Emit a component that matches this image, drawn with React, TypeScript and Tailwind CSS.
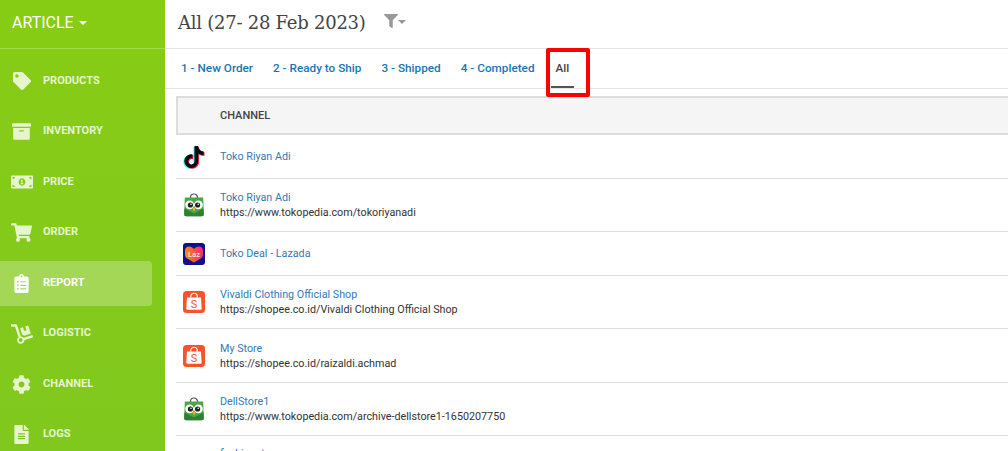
import { ReactNode } from 'react'
import { FaTag, FaArchive, FaMoneyBillAlt, FaShoppingCart, FaClipboardList, FaDolly, FaCog, FaFileAlt, FaFilter } from 'react-icons/fa'

const navItems = [
  { label: 'PRODUCTS', icon: <FaTag size={18} /> },
  { label: 'INVENTORY', icon: <FaArchive size={19} /> },
  { label: 'PRICE', icon: <FaMoneyBillAlt size={22} /> },
  { label: 'ORDER', icon: <FaShoppingCart size={21} /> },
  { label: 'REPORT', icon: <FaClipboardList size={19} />, active: true },
  { label: 'LOGISTIC', icon: <FaDolly size={22} /> },
  { label: 'CHANNEL', icon: <FaCog size={19} /> },
  { label: 'LOGS', icon: <FaFileAlt size={19} /> },
]

const tabs = ['1 - New Order', '2 - Ready to Ship', '3 - Shipped', '4 - Completed']

const tiktokPath =
  'M12.525.02c1.31-.02 2.61-.01 3.91-.02.08 1.53.63 3.09 1.75 4.17 1.12 1.11 2.7 1.62 4.24 1.79v4.03c-1.44-.05-2.89-.35-4.2-.97-.57-.26-1.1-.59-1.62-.93-.01 2.92.01 5.84-.02 8.75-.08 1.4-.54 2.79-1.35 3.94-1.31 1.92-3.58 3.17-5.91 3.21-1.43.08-2.86-.31-4.08-1.03-2.02-1.19-3.44-3.37-3.65-5.71-.02-.5-.03-1-.01-1.49.18-1.9 1.12-3.72 2.58-4.96 1.66-1.44 3.98-2.13 6.15-1.72.02 1.48-.04 2.96-.04 4.44-.99-.32-2.15-.23-3.02.37-.63.41-1.11 1.04-1.36 1.75-.21.51-.15 1.07-.14 1.61.24 1.64 1.82 3.02 3.5 2.87 1.12-.01 2.19-.66 2.77-1.61.19-.33.4-.67.41-1.06.1-1.79.06-3.57.07-5.36.01-4.03-.01-8.05.02-12.07z'

function TikTok() {
  return (
    <svg width="24" height="24" viewBox="-1 -1 26 26">
      <path d={tiktokPath} fill="#25f4ee" transform="translate(-1 .8)" />
      <path d={tiktokPath} fill="#fe2c55" transform="translate(1 .8)" />
      <path d={tiktokPath} fill="#0b0b12" />
    </svg>
  )
}

function Tokopedia() {
  return (
    <svg width="22" height="24" viewBox="0 0 22 24">
      <path d="M7.500 6V4.500a3.500 3.500 0 0 1 7 0V6" fill="none" stroke="#555a55" strokeWidth="1.200" />
      <path d="M1.800 4.500h18.400l.6 16.500a2 2 0 0 1-2 2.200H3.200a2 2 0 0 1-2-2.200z" fill="#4aa844" />
      <path d="M1.400 15.500l9.600 5 9.600-5 .2 5.500a2 2 0 0 1-2 2.200H3.200a2 2 0 0 1-2-2.200z" fill="#2e7f33" />
      <circle cx="6.600" cy="11.800" r="4.400" fill="#fff" />
      <circle cx="15.400" cy="11.800" r="4.400" fill="#fff" />
      <circle cx="7.400" cy="12" r="2.600" fill="#222" />
      <circle cx="14.600" cy="12" r="2.600" fill="#222" />
      <circle cx="8" cy="11.200" r=".8" fill="#fff" />
      <circle cx="15.200" cy="11.200" r=".8" fill="#fff" />
      <path d="M9.300 15h3.400L11 18.500z" fill="#f5b335" />
    </svg>
  )
}

function Lazada() {
  return (
    <svg width="22" height="22" viewBox="0 0 22 22">
      <defs>
        <linearGradient id="laz" x1="0" y1="0" x2="1" y2="0">
          <stop offset="0" stopColor="#ff8a00" />
          <stop offset="1" stopColor="#f0287f" />
        </linearGradient>
      </defs>
      <rect width="22" height="22" rx="3" fill="#10108a" />
      <path d="M11 19.500 3.800 15.200C2.500 14.400 2 13 2 11.500V7.500C2 5 4 3.500 6.200 3.500c1.900 0 3.500 1 4.800 2.500 1.300-1.500 2.900-2.500 4.800-2.500C18 3.500 20 5 20 7.500v4c0 1.500-.5 2.900-1.800 3.700z" fill="url(#laz)" />
      <text x="11" y="13.500" textAnchor="middle" fontSize="7.500" fontWeight="500" fill="#fde6df" fontFamily="Roboto, sans-serif">Laz</text>
    </svg>
  )
}

function Shopee() {
  return (
    <svg width="22" height="22" viewBox="0 0 22 22">
      <rect width="22" height="22" rx="3.500" fill="#f6532d" />
      <path d="M7.800 6.500V5.500a3.200 3.200 0 0 1 6.400 0v1" fill="none" stroke="#fff" strokeWidth="1.100" />
      <path d="M4 6.500h14l.7 11a1.300 1.300 0 0 1-1.300 1.300H4.600a1.300 1.300 0 0 1-1.300-1.300z" fill="#fff" />
      <text x="11" y="16.800" textAnchor="middle" fontSize="11" fontWeight="400" fill="#f6532d" fontFamily="Roboto, sans-serif">S</text>
    </svg>
  )
}

function Row({ icon, name, url, height }: { icon: ReactNode; name: string; url?: string; height: string }) {
  return (
    <div className={`flex items-center border-b border-[#ddd] ${height}`}>
      <div className="w-[36px] mr-[8px] shrink-0 flex justify-center">{icon}</div>
      <div className="text-[10.75px] leading-[15px]">
        <div className="text-[#337ab7]">{name}</div>
        {url && <div className="text-[#333]">{url}</div>}
      </div>
    </div>
  )
}

export default function App() {
  return (
    <div className="flex w-[1008px] h-[451px] overflow-hidden bg-white font-['Roboto',sans-serif]">
      {/* sidebar */}
      <div className="w-[165px] shrink-0 bg-gradient-to-b from-[#87cc14] to-[#81c81e]">
        <div className="h-[49px] border-b border-[#a4da50] pl-3 pb-[3px] flex items-center gap-[5px] text-white text-[16px]">
          ARTICLE
          <span className="border-x-[4px] border-t-[4px] border-x-transparent border-t-white" />
        </div>
        <div className="pt-[9.5px] flex flex-col gap-[5.5px]">
          {navItems.map(item => (
            <div
              key={item.label}
              className={`h-[45px] w-[152px] flex items-center rounded-r ${item.active ? 'bg-[#a3d755] text-white' : 'text-[#e6f5cc]'}`}>
              <div className="w-[43px] shrink-0 flex justify-center">{item.icon}</div>
              <span className="text-[11px] font-bold">{item.label}</span>
            </div>
          ))}
        </div>
      </div>

      {/* content */}
      <div className="flex-1 min-w-0">
        <div className="h-[49px] border-b border-[#e5e5e5] flex items-center pl-[13px] pb-[4px]">
          <span className="text-[#444] text-[18px] font-['DejaVu_Serif',serif] tracking-[-0.25px]">All (27- 28 Feb 2023)</span>
          <span className="ml-[18px] flex items-center text-[#999] -mt-[3px]">
            <FaFilter size={14} />
            <span className="border-x-[4px] border-t-[4px] border-x-transparent border-t-[#999] mt-[2px]" />
          </span>
        </div>
        <div className="h-[40px] border-b border-[#e5e5e5] flex items-center pl-[16px] text-[11.75px] font-medium text-[#1a75b5]">
          {tabs.map(t => (
            <span key={t} className="mr-[20px]">{t}</span>
          ))}
          <div className="relative ml-[1px] h-[40px] flex items-center text-[#444]">
            All
            <span className="absolute left-[-5px] w-[23px] h-[2px] bg-[#555] top-[37px]" />
            <span className="absolute left-[-10px] -top-[1px] w-[44px] h-[49px] border-[4px] border-[#f00] rounded-[2px]" />
          </div>
        </div>
        <div className="ml-[11px] mt-[7px]">
          <div className="h-[39px] bg-[#f5f5f5] border-2 border-[#ddd] border-r-0 pt-[2px] flex items-center pl-[42px] text-[11px] font-medium text-[#444]">
            CHANNEL
          </div>
          <Row height="h-[44px]" icon={<TikTok />} name="Toko Riyan Adi" />
          <Row height="h-[53px]" icon={<Tokopedia />} name="Toko Riyan Adi" url="https://www.tokopedia.com/tokoriyanadi" />
          <Row height="h-[44px]" icon={<Lazada />} name="Toko Deal - Lazada" />
          <Row height="h-[53px]" icon={<Shopee />} name="Vivaldi Clothing Official Shop" url="https://shopee.co.id/Vivaldi Clothing Official Shop" />
          <Row height="h-[54px]" icon={<Shopee />} name="My Store" url="https://shopee.co.id/raizaldi.achmad" />
          <Row height="h-[53px]" icon={<Tokopedia />} name="DellStore1" url="https://www.tokopedia.com/archive-dellstore1-1650207750" />
          <div className="pl-[44px] pt-[10px] text-[10.75px] leading-[15px] text-[#337ab7]">fashionstore</div>
        </div>
      </div>
    </div>
  )
}
